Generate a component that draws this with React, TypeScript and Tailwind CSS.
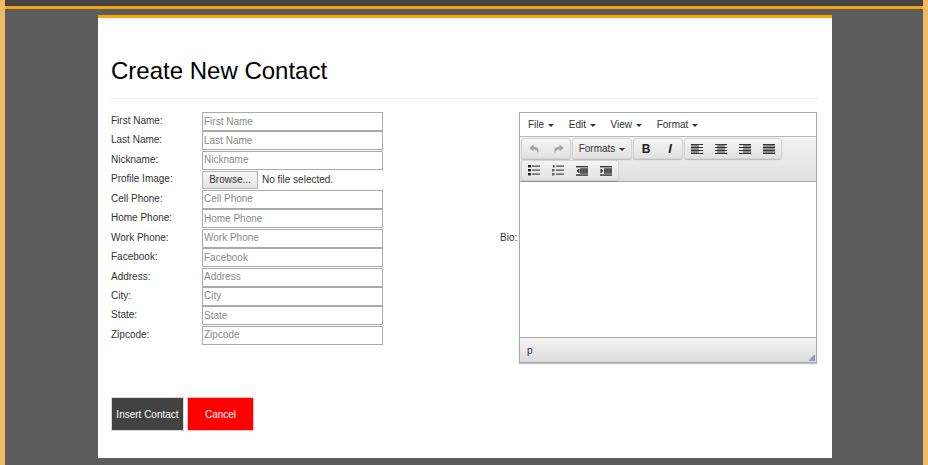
import React from "react";

const fields: [string, string][] = [
  ["First Name:", "First Name"],
  ["Last Name:", "Last Name"],
  ["Nickname:", "Nickname"],
  ["Profile Image:", ""],
  ["Cell Phone:", "Cell Phone"],
  ["Home Phone:", "Home Phone"],
  ["Work Phone:", "Work Phone"],
  ["Facebook:", "Facebook"],
  ["Address:", "Address"],
  ["City:", "City"],
  ["State:", "State"],
  ["Zipcode:", "Zipcode"],
];

const Caret = () => (
  <span className="ml-[4px] inline-block h-0 w-0 border-x-[3px] border-t-[3px] border-x-transparent border-t-[#333] align-middle" />
);

const Lines = ({ rows }: { rows: [number, number, number][] }) => (
  <svg width="12" height="10" viewBox="0 0 12 10" fill="#333">
    {rows.map(([x, y, w], i) => (
      <rect key={i} x={x} y={y} width={w} height="1" />
    ))}
  </svg>
);

const Btn = ({ children, w = 24 }: { children: React.ReactNode; w?: number }) => (
  <div className="flex h-[19px] items-center justify-center" style={{ width: w }}>
    {children}
  </div>
);

const Group = ({ children }: { children: React.ReactNode }) => (
  <div className="mr-[1px] flex h-[21px] items-center rounded-[3px] border border-[#d4d4d4] bg-gradient-to-b from-[#f4f4f4] to-[#e2e2e2] shadow-[0_1px_1px_rgba(0,0,0,0.2)]">
    {children}
  </div>
);

const BulletList = () => (
  <svg width="12" height="11" viewBox="0 0 12 11" fill="#222">
    <rect x="0" y="0" width="3" height="2.4" />
    <rect x="0" y="4" width="3" height="2.4" />
    <rect x="0" y="8" width="3" height="2.4" />
    <rect x="4" y="0.5" width="8" height="1.2" fill="#444" />
    <rect x="4" y="4.5" width="8" height="1.2" fill="#444" />
    <rect x="4" y="8.5" width="8" height="1.2" fill="#444" />
  </svg>
);
const NumList = () => (
  <svg width="12" height="11" viewBox="0 0 12 11" fill="#444">
    <rect x="1" y="0" width="1.5" height="2.5" />
    <rect x="0" y="4" width="2.5" height="2.5" opacity="0.8" />
    <rect x="0" y="8" width="2.5" height="2.5" opacity="0.8" />
    <rect x="4" y="0.5" width="8" height="1.2" />
    <rect x="4" y="4.5" width="8" height="1.2" />
    <rect x="4" y="8.5" width="8" height="1.2" />
  </svg>
);
const Indent = ({ out }: { out?: boolean }) => (
  <svg width="12" height="10" viewBox="0 0 12 10" fill="#333">
    <rect x="0" y="0" width="12" height="1.4" />
    <rect x="4" y="2.2" width="8" height="5.6" fill="#555" />
    <rect x="0" y="8.4" width="12" height="1.4" />
    <path d={out ? "M3.5 2.5 L0.5 5 L3.5 7.5 Z" : "M0.5 2.5 L3.5 5 L0.5 7.5 Z"} />
  </svg>
);
const Undo = ({ flip }: { flip?: boolean }) => (
  <svg width="11" height="10" viewBox="0 0 11 10" fill="#a3a3a3" className={flip ? "-scale-x-100" : ""}>
    <path d="M4.5 0.5 L0.3 4 L4.5 7.5 V5.2 C7 5.2 8.3 6.4 8.8 9.5 C10.8 5.4 9 2.7 4.5 2.7 Z" />
  </svg>
);

const wide = (y: number): [number, number, number] => [0, y, 12];
const sh = (x: number, y: number, w: number): [number, number, number] => [x, y, w];
const alignFull: [number, number, number][] = [wide(0), wide(1.5), wide(3), wide(4.5), wide(6), wide(7.5), wide(9)];
const alignLeft: [number, number, number][] = [wide(0), sh(0, 1.5, 8), wide(3), sh(0, 4.5, 8), wide(6), sh(0, 7.5, 8), wide(9)];
const alignCenter: [number, number, number][] = [wide(0), sh(2, 1.5, 8), wide(3), sh(2, 4.5, 8), wide(6), sh(2, 7.5, 8), wide(9)];
const alignRight: [number, number, number][] = [wide(0), sh(4, 1.5, 8), wide(3), sh(4, 4.5, 8), wide(6), sh(4, 7.5, 8), wide(9)];

export default function App() {
  return (
    <div
      className="flex h-[465px] w-[928px] flex-col overflow-hidden border-x-[5px] border-x-[#efbb66] bg-[#5c5c5c] text-[10px] text-[#333]"
      style={{ fontFamily: '"Liberation Sans", Arial, sans-serif' }}
    >
      <div className="h-[9px] shrink-0 border-b-[3px] border-b-[#f5a30f] bg-[#434343]" />
      <main className="ml-[93px] mt-[6px] flex h-[443px] w-[734px] shrink-0 flex-col border-t-[3px] border-t-[#ffa500] bg-white px-[13px]">
        <h1 className="mt-[39px] border-b border-b-[#eeeeee] pb-[13px] text-[24px] leading-[28px] text-black">
          Create New Contact
        </h1>
        <div className="mt-[13px] flex items-start">
          <form className="flex w-[272px] flex-col">
            {fields.map(([label, ph]) => (
              <div key={label} className="flex h-[19.45px] items-start">
                <label className="w-[91px] shrink-0 leading-[18.4px]">{label}</label>
                {ph ? (
                  <input
                    readOnly
                    placeholder={ph}
                    className="h-[19px] w-[181px] border border-[#aaaaaa] bg-white px-[1px] pb-[1px] text-[10px] outline-none placeholder:text-[#8a8a8a]"
                  />
                ) : (
                  <div className="flex h-[19px] items-center">
                    <span className="flex h-[18px] w-[56px] items-center justify-center border border-[#b4b4b4] bg-gradient-to-b from-[#f6f6f6] to-[#e4e4e4]">
                      Browse...
                    </span>
                    <span className="ml-[4px]">No file selected.</span>
                  </div>
                )}
              </div>
            ))}
          </form>
          <div className="ml-[117px] flex items-center">
            <span className="mr-[2px] w-[17px]">Bio:</span>
            <div className="flex h-[251px] w-[298px] flex-col border border-[#a9a9a9] shadow-[0_1px_1px_rgba(0,0,0,0.25)]">
              <div className="flex h-[24px] shrink-0 items-center gap-[14.6px] border-b border-b-[#b8b8b8] bg-white pl-[8px] text-[#333]">
                <span>File<Caret /></span>
                <span>Edit<Caret /></span>
                <span>View<Caret /></span>
                <span>Format<Caret /></span>
              </div>
              <div className="flex h-[45px] shrink-0 flex-col gap-[1px] border-b border-b-[#a9a9a9] bg-gradient-to-b from-[#f3f3f3] to-[#e0e0e0] pl-[1px] pt-[1px]">
                <div className="flex">
                  <Group>
                    <Btn><Undo /></Btn>
                    <Btn><Undo flip /></Btn>
                  </Group>
                  <Group>
                    <Btn w={58}><span>Formats<Caret /></span></Btn>
                  </Group>
                  <Group>
                    <Btn><span className="text-[12px] font-bold text-[#222]">B</span></Btn>
                    <Btn><span className="text-[13px] font-bold italic text-[#222]">I</span></Btn>
                  </Group>
                  <Group>
                    <Btn><Lines rows={alignLeft} /></Btn>
                    <Btn><Lines rows={alignCenter} /></Btn>
                    <Btn><Lines rows={alignRight} /></Btn>
                    <Btn><Lines rows={alignFull} /></Btn>
                  </Group>
                </div>
                <div className="flex">
                  <Group>
                    <Btn><BulletList /></Btn>
                    <Btn><NumList /></Btn>
                    <Btn><Indent out /></Btn>
                    <Btn><Indent /></Btn>
                  </Group>
                </div>
              </div>
              <div className="flex-1 bg-white" />
              <div className="relative flex h-[25px] shrink-0 items-center border-t border-t-[#a9a9a9] bg-gradient-to-b from-[#f5f5f5] to-[#dcdcdc] pl-[7px]">
                p
                <svg className="absolute bottom-[1px] right-[1px]" width="6" height="6" viewBox="0 0 6 6" fill="#8d9aa5">
                  <path d="M5 0 H6 V6 H0 V5 Z" />
                </svg>
              </div>
            </div>
          </div>
        </div>
        <div className="mt-[34px] flex gap-[3px] text-white">
          <button type="button" className="flex h-[34px] w-[73px] items-center justify-center border border-[#d8d8d8] bg-[#424242]">
            Insert Contact
          </button>
          <button type="button" className="flex h-[34px] w-[67px] items-center justify-center border border-[#ffc0c0] bg-[#ff0000]">
            Cancel
          </button>
        </div>
      </main>
    </div>
  );
}
